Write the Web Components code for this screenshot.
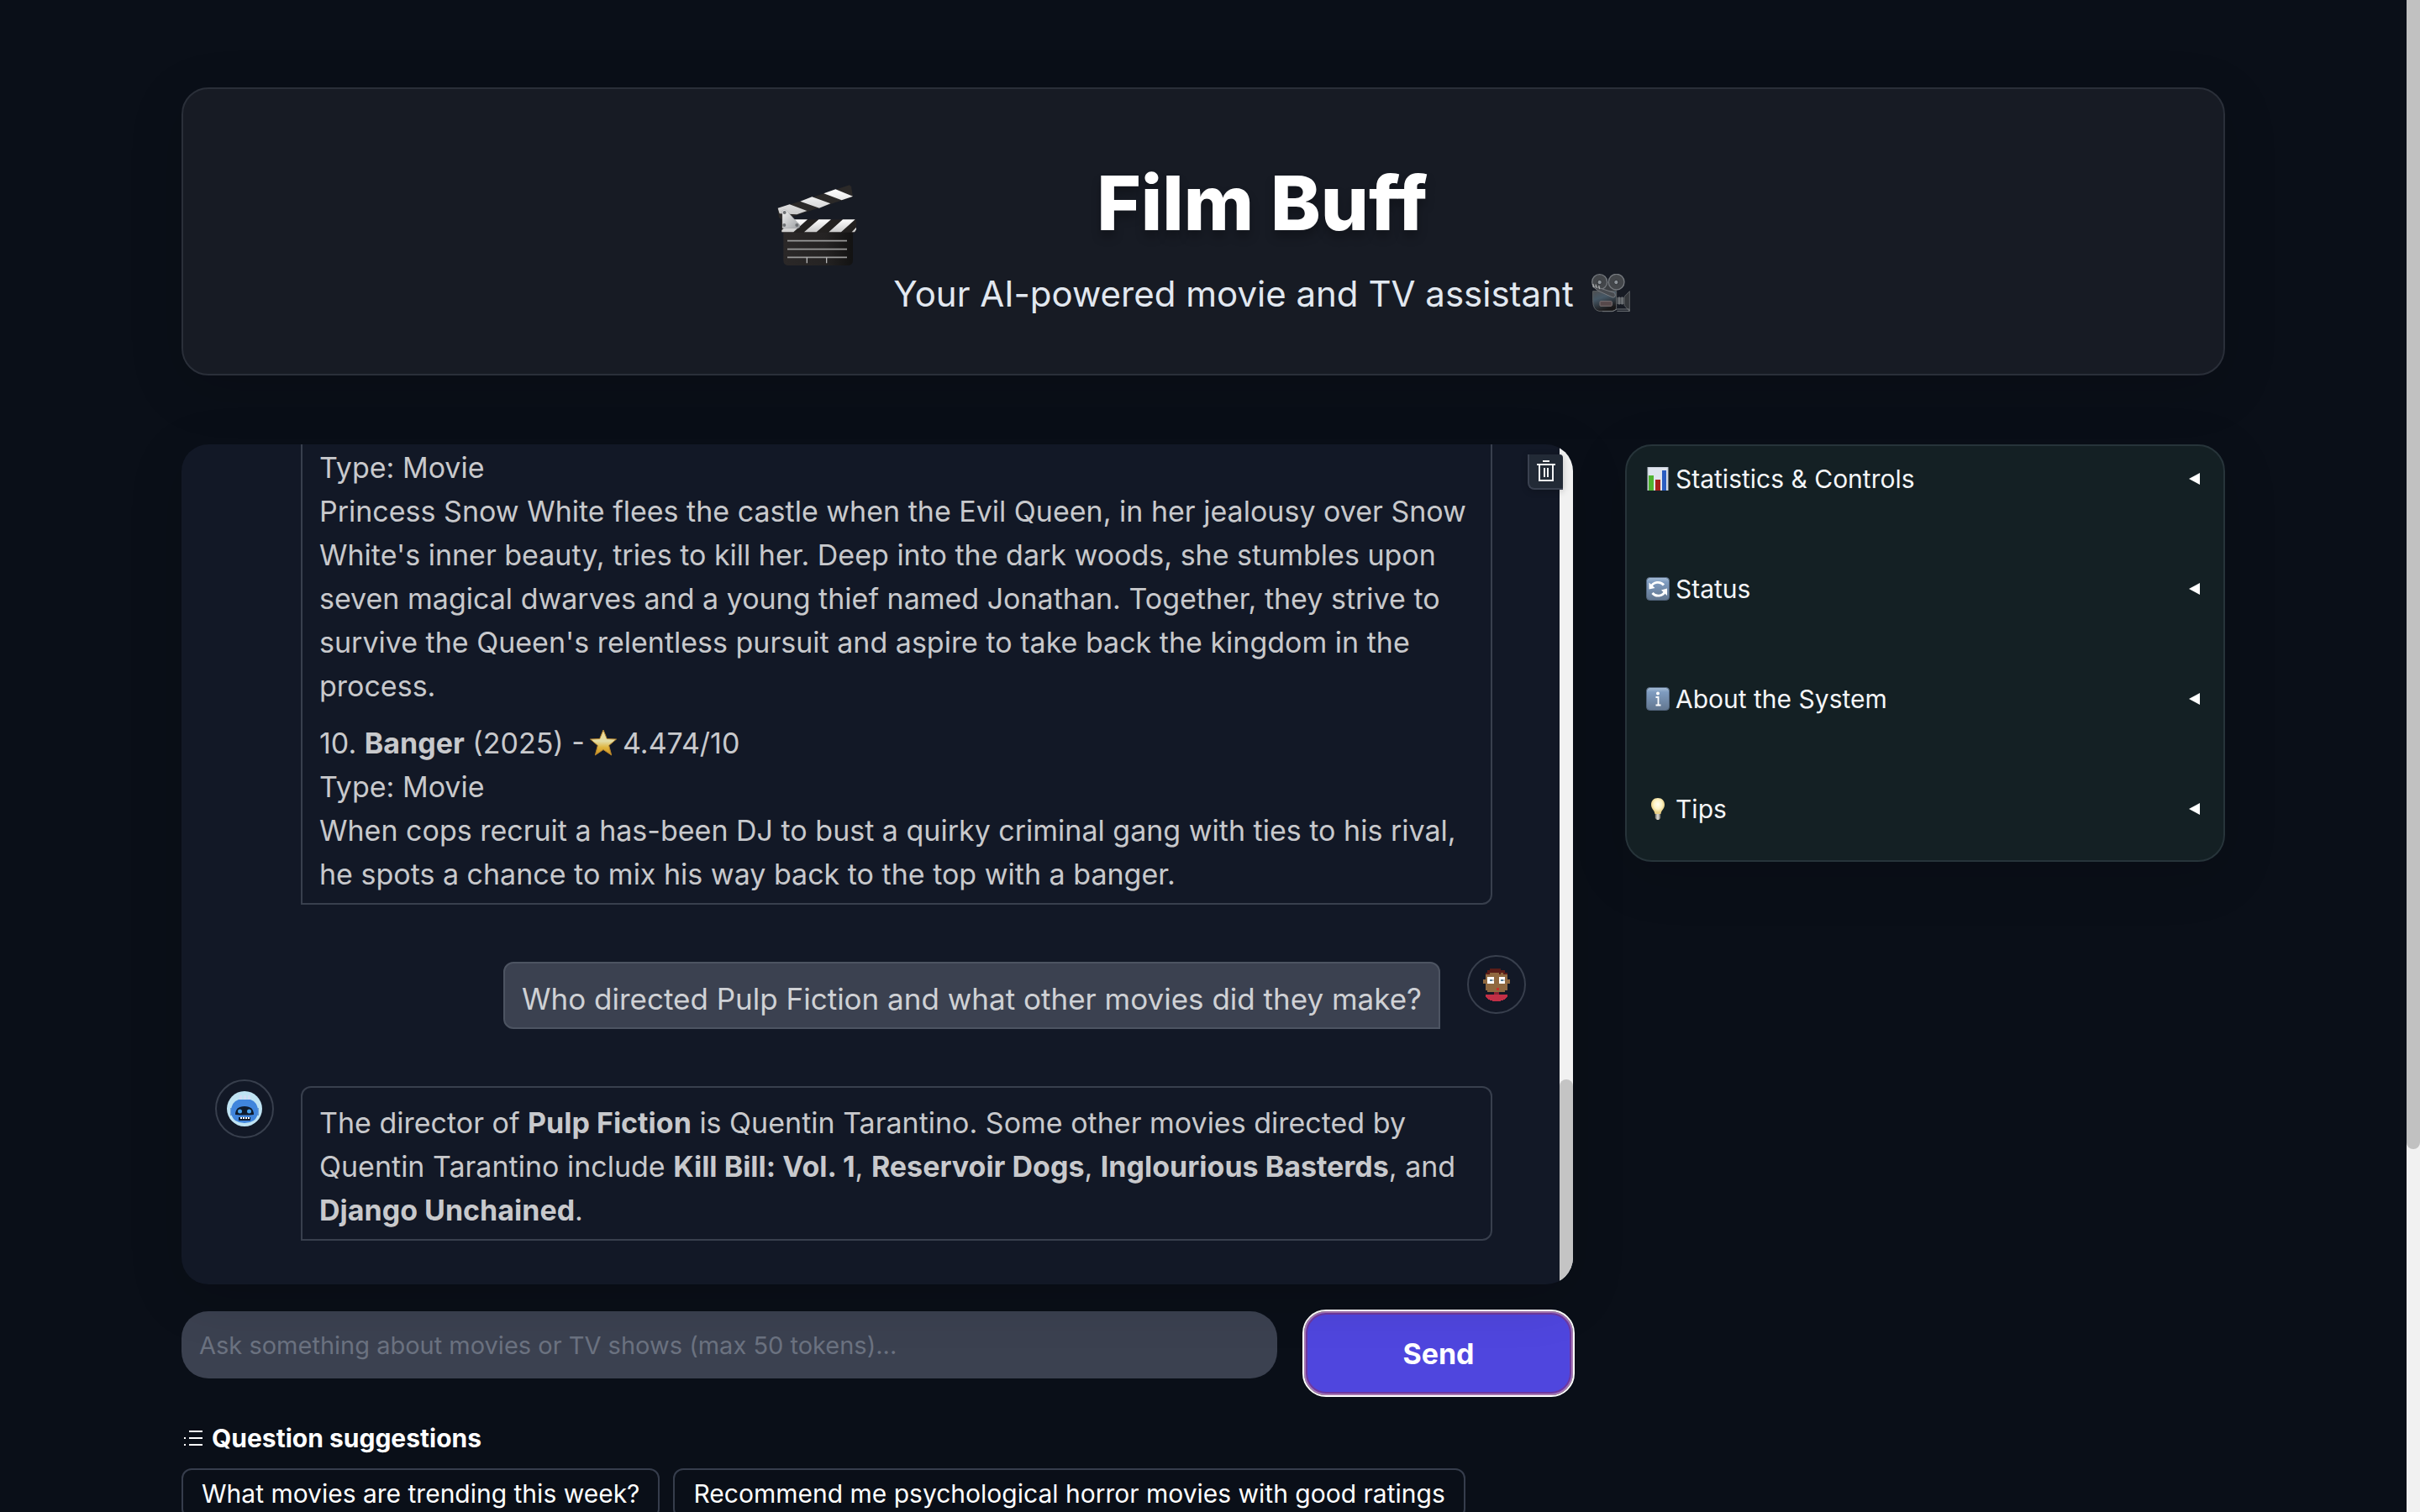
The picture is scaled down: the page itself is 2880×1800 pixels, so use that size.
<!DOCTYPE html>
<html lang="en">
<head>
<meta charset="utf-8">
<title>Film Buff</title>
<style>
  html, body { margin: 0; height: 100%; }
  body {
    background: #0a0f18;
    color: #f5f6f8;
    font-family: Inter, "Liberation Sans", sans-serif;
    font-size: 34px;
    overflow: hidden;
  }
</style>
</head>
<body>

<film-app>
  <film-header slot="header"></film-header>
  <chat-log slot="main">
    <chat-message from="bot">
      <p>Type: Movie<br>Princess Snow White flees the castle when the Evil Queen, in her jealousy over Snow<br>White's inner beauty, tries to kill her. Deep into the dark woods, she stumbles upon<br>seven magical dwarves and a young thief named Jonathan. Together, they strive to<br>survive the Queen's relentless pursuit and aspire to take back the kingdom in the<br>process.</p>
      <p>10. <b>Banger</b> (2025) - <star-icon></star-icon> 4.474/10<br>Type: Movie<br>When cops recruit a has-been DJ to bust a quirky criminal gang with ties to his rival,<br>he spots a chance to mix his way back to the top with a banger.</p>
    </chat-message>
    <chat-message from="user">
      <p>Who directed Pulp Fiction and what other movies did they make?</p>
    </chat-message>
    <chat-message from="bot" avatar>
      <p>The director of <b>Pulp Fiction</b> is Quentin Tarantino. Some other movies directed by<br>Quentin Tarantino include <b>Kill Bill: Vol. 1</b>, <b>Reservoir Dogs</b>, <b>Inglourious Basterds</b>, and<br><b>Django Unchained</b>.</p>
    </chat-message>
  </chat-log>
  <ask-form slot="main"></ask-form>
  <question-suggestions slot="main">
    <suggestion-chip>What movies are trending this week?</suggestion-chip>
    <suggestion-chip>Recommend me psychological horror movies with good ratings</suggestion-chip>
  </question-suggestions>
  <side-panel slot="side">
    <panel-row>
      <svg slot="icon" width="28" height="28" viewBox="0 0 28 28">
        <rect x="2" y="0" width="24" height="28" fill="#dfe5ee" stroke="#b9c0cc"/>
        <rect x="3" y="10" width="6" height="18" fill="#4fb32f"/>
        <rect x="11" y="15" width="6" height="13" fill="#a8201a"/>
        <rect x="19" y="4" width="5" height="24" fill="#2a5cc0"/>
      </svg>Statistics &amp; Controls</panel-row>
    <panel-row>
      <svg slot="icon" width="28" height="28" viewBox="0 0 28 28">
        <defs><linearGradient id="tile" x2="0" y2="1"><stop stop-color="#a9c0d8"/><stop offset=".2" stop-color="#7f9cc0"/><stop offset="1" stop-color="#62768f"/></linearGradient></defs>
        <rect x="0.5" y="0.5" width="27" height="27" rx="4" fill="url(#tile)" stroke="#52647c"/>
        <path d="M6 11.500a8.500 7.500 0 0 1 15-2M22.500 17a8.500 7.500 0 0 1-15 2" fill="none" stroke="#fff" stroke-width="2.800"/>
        <path d="M3.500 6.500v8l7-1.500zM25 22v-8.500l-7 2z" fill="#fff"/>
      </svg>Status</panel-row>
    <panel-row>
      <svg slot="icon" width="28" height="28" viewBox="0 0 28 28">
        <rect x="0.5" y="0.5" width="27" height="27" rx="4" fill="url(#tile)" stroke="#52647c"/>
        <circle cx="14" cy="7.500" r="2" fill="#fff"/>
        <path d="M11.500 12h3v9M11.500 21.500h6" fill="none" stroke="#fff" stroke-width="1.800"/>
      </svg>About the System</panel-row>
    <panel-row>
      <svg slot="icon" width="28" height="28" viewBox="0 0 28 28">
        <defs>
          <radialGradient id="glow" cy=".4"><stop stop-color="#fffef2"/><stop offset=".6" stop-color="#fdf3c4"/><stop offset="1" stop-color="#e8cf86"/></radialGradient>
          <linearGradient id="cap"><stop stop-color="#77746c"/><stop offset=".5" stop-color="#e4e2dc"/><stop offset="1" stop-color="#66635c"/></linearGradient>
        </defs>
        <path d="M14 1c5 0 8 3.500 8 8 0 5-4 6.500-4.500 11h-7C10 15.500 6 14 6 9c0-4.500 3-8 8-8z" fill="url(#glow)"/>
        <path d="M10.800 20h6.400v5l-2 2h-2.400l-2-2z" fill="url(#cap)"/>
      </svg>Tips</panel-row>
  </side-panel>
</film-app>

<script>
function define(name, html) {
  const template = document.createElement('template');
  template.innerHTML = html;
  customElements.define(name, class extends HTMLElement {
    constructor() {
      super();
      this.attachShadow({ mode: 'open' }).append(template.content.cloneNode(true));
    }
  });
}

define('film-app', `
  <style>
    :host { display: flex; height: 100vh; overflow: hidden; }
    .page { flex: 1; min-width: 0; padding: 104px 216px 0; overflow: hidden; }
    .columns { display: grid; grid-template-columns: minmax(0, 1fr) 714px; gap: 62px; align-items: start; margin-top: 82px; }
    .main { display: flex; flex-direction: column; }
    .bar { width: 16px; background: #f1f1f1; }
    .thumb { height: 76%; background: #c1c1c1; border-radius: 0 0 8px 8px; }
  </style>
  <div class="page">
    <slot name="header"></slot>
    <div class="columns">
      <div class="main"><slot name="main"></slot></div>
      <slot name="side"></slot>
    </div>
  </div>
  <div class="bar"><div class="thumb"></div></div>`);

define('film-header', `
  <style>
    :host {
      display: flex; justify-content: center; align-items: flex-start; gap: 44px;
      padding: 78px 0 65px; border: 2px solid #2a2f39; border-radius: 32px;
      background: #171b24; box-shadow: 0 16px 64px rgba(0, 0, 0, .15);
    }
    .clapper { margin-top: 36px; }
    .text { display: flex; flex-direction: column; align-items: center; gap: 20px; }
    h1 { margin: 0; font-size: 90px; line-height: 116px; font-weight: 800; color: #fff; text-shadow: 0 8px 12px rgba(0, 0, 0, .25); }
    p { margin: 0; display: flex; align-items: center; gap: 20px; font-size: 42px; line-height: 60px; color: #e2e8f0; }
    svg { display: block; }
  </style>
  <svg class="clapper" width="96" height="96" viewBox="72 61 288 288" aria-hidden="true">
    <defs>
      <linearGradient id="slate"><stop stop-color="#2b2828"/><stop offset=".6" stop-color="#252323"/><stop offset="1" stop-color="#121212"/></linearGradient>
      <linearGradient id="metal" x2="1" y2="1"><stop stop-color="#f1f1f1"/><stop offset="1" stop-color="#9da0a3"/></linearGradient>
      <linearGradient id="stripe" x2="0" y2="1"><stop stop-color="#fff"/><stop offset="1" stop-color="#c9c9c9"/></linearGradient>
    </defs>
    <path d="M100 226h248v104q0 19-20 19H120q-20 0-20-19z" fill="url(#slate)"/>
    <path d="M114 261h213M114 291h213M114 320h213" stroke="#989898" stroke-width="5"/>
    <path d="M184 320v21M254 320v21" stroke="#b5b5b5" stroke-width="4"/>
    <path d="M92 185h264q4 0 4 5v32q-1 9-8 9H96q-4 0-4-8z" fill="#232120"/>
    <path d="M94 230h42l50-45h-50l-42 38zM174 230h44l52-45h-44zM262 230h44l50-45h-44zM344 230h10l6-9v-8z" fill="url(#stripe)"/>
    <path d="M80 146L336 62l6 6 6 36-252 82-12-8z" fill="#2b2928"/>
    <path d="M80 144l42-13 62 23-36 13-62-3zM160 120l42-16 66 24-40 16zM244 92l42-15 62 25-40 14z" fill="url(#stripe)"/>
    <path d="M96 154q6-8 14-2l48 52q3 11-6 12h-56z" fill="url(#metal)" stroke="#86898c"/>
    <g fill="#6d7073"><circle cx="104" cy="160" r="6"/><circle cx="103" cy="205" r="6"/><circle cx="148" cy="205" r="6"/></g>
  </svg>
  <div class="text">
    <h1>Film Buff</h1>
    <p>Your AI-powered movie and TV assistant
      <svg width="48" height="48" viewBox="66 44 144 144" aria-hidden="true">
        <defs><linearGradient id="cam" x2=".4" y2="1"><stop stop-color="#4d4f52"/><stop offset=".4" stop-color="#465866"/><stop offset="1" stop-color="#191718"/></linearGradient></defs>
        <path d="M98 74h60v32H98z" fill="#3b3e42"/>
        <g fill="#43464a" stroke="#74787d" stroke-width="4"><circle cx="98" cy="73" r="27"/><circle cx="158" cy="73" r="28"/></g>
        <g fill="#8d9399" stroke="#303337" stroke-width="3"><circle cx="98" cy="74" r="8"/><circle cx="157" cy="74" r="8"/></g>
        <path d="M74 106h84v56q0 14-14 15h-48q-22-3-22-38z" fill="url(#cam)" stroke="#5d6063" stroke-width="3"/>
        <path d="M72 88l24 6 56 18q6 18-8 16L92 104z" fill="#484b50" stroke="#777a7f" stroke-width="3"/>
        <path d="M74 80l4 12M84 82l3 12M95 86l3 12" stroke="#a9abad" stroke-width="4"/>
        <rect x="99" y="142" width="43" height="17" rx="3" fill="#56484a" stroke="#7a7072" stroke-width="3"/>
        <path d="M160 128h26v24h-26z" fill="#54585d"/><path d="M168 126v28M178 126v28" stroke="#85888c" stroke-width="3"/>
        <path d="M186 126l19-20v72l-19-22z" fill="#34373b" stroke="#5b5e63" stroke-width="3"/>
        <path d="M108 178h36l16-8h44v7h-44" fill="none" stroke="#73777b" stroke-width="3"/>
      </svg>
    </p>
  </div>`);

define('star-icon', `
  <style>
    :host { display: inline-flex; vertical-align: middle; margin: -8px -4px 0; }
  </style>
  <svg width="34" height="32" viewBox="0 0 34 32" aria-hidden="true">
    <defs><linearGradient id="gold" x2="0" y2="1"><stop stop-color="#f3d98e"/><stop offset=".45" stop-color="#e2dca4"/><stop offset=".7" stop-color="#dfb43c"/><stop offset="1" stop-color="#c98f22"/></linearGradient></defs>
    <path d="M17 1l4.300 10.500L32.500 12l-8.800 7.500 3 11.500L17 24.500 7.300 31l3-11.500L1.500 12l11.200-.5z" fill="url(#gold)" stroke="#b07f2a"/>
  </svg>`);

define('chat-log', `
  <style>
    :host {
      display: flex; height: 1000px; border-radius: 32px; overflow: hidden; position: relative;
      background: #121826; box-shadow: 0 16px 64px rgba(0, 0, 0, .15);
    }
    .log { flex: 1; min-width: 0; box-sizing: border-box; padding: 0 40px 52px; display: flex; flex-direction: column; justify-content: flex-end; gap: 60px; }
    .bar { width: 16px; display: flex; align-items: flex-end; background: #f1f1f1; }
    .thumb { width: 100%; height: 244px; background: #c4c4c4; border-radius: 8px 8px 0 0; }
    button {
      position: absolute; top: 12px; right: 12px; width: 42px; height: 42px; padding: 0;
      display: flex; align-items: center; justify-content: center; color: #f3f4f6;
      background: #222a36; border: 0 solid #3a4150; border-width: 0 0 2px 2px; border-radius: 0 4px 0 8px;
      box-shadow: 0 2px 8px rgba(0, 0, 0, .2);
    }
  </style>
  <div class="log"><slot></slot></div>
  <div class="bar"><div class="thumb"></div></div>
  <button type="button" aria-label="Clear">
    <svg width="22" height="26" viewBox="0 0 22 26" fill="none" stroke="currentColor" stroke-width="2">
      <path d="M0 5h22M7 1h8M3 5v19h16V5M9 9v11M13 9v11"/>
    </svg>
  </button>`);

const ROBOT = `
  <svg width="42" height="42" viewBox="0 0 42 42">
    <circle cx="21" cy="21" r="21" fill="#bfe3f3"/>
    <path d="M15 5h3v5h-3zM20 5h3v5h-3zM25 5h3v5h-3z" fill="#d3dcf4"/>
    <path d="M4 20h34v9H4z" fill="#6f9fd8"/>
    <path d="M14 10h14q9 3 9 14 0 7-5 11-5 3-11 3t-11-3q-5-4-5-11 0-11 9-14z" fill="#4085dc"/>
    <path d="M10 28q0-10 11-10t11 10q-11 1-22 0z" fill="#0e1a2c"/>
    <circle cx="15.500" cy="24" r="2.500" fill="#4aa3ec"/><circle cx="26.500" cy="24" r="2.500" fill="#4aa3ec"/>
    <path d="M14 31h14v4H14z" fill="#0e1a2c"/>
    <path d="M16 31h2v2h-2zM19 31h2v2h-2zM22 31h2v2h-2zM25 31h2v2h-2z" fill="#fff"/>
  </svg>`;

const PERSON = `
  <svg width="32" height="39" viewBox="795 162 96 117" shape-rendering="crispEdges">
    <path d="M804 177h78v63h-9v6h-63v-6h-6zM795 201h9v15h-9zM882 201h9v15h-9z" fill="#8f6840"/>
    <path d="M819 162h39v6h15v9h9v6h-15v-6h-9v6h-6v-6h-33v6h-15v-6h6v-9h9z" fill="#5a1d18"/>
    <path d="M810 192h24v24h-24zM852 192h21v24h-21z" fill="#fff"/>
    <path d="M819 201h9v6h-9zM858 201h9v6h-9z" fill="#5b7f96"/>
    <path d="M828 201h6v6h-6zM867 201h6v6h-6z" fill="#ccc"/>
    <path d="M843 231h9v9h-9z" fill="#c8312a"/>
    <path d="M834 246h18v9h-18z" fill="#8e2233"/>
    <path d="M804 255h78v9q-12 15-39 15t-39-15z" fill="#c22f46"/>
  </svg>`;

customElements.define('chat-message', class extends HTMLElement {
  constructor() {
    super();
    this.attachShadow({ mode: 'open' });
  }
  connectedCallback() {
    this.shadowRoot.innerHTML = `
      <style>
        :host { display: flex; align-items: flex-start; gap: 32px; flex: none; }
        :host([from="user"]) { flex-direction: row-reverse; }
        .avatar {
          box-sizing: border-box; width: 70px; height: 70px; flex: none; border-radius: 50%; border: 2px solid #383f4d;
          display: flex; align-items: center; justify-content: center;
        }
        :host([from="bot"]:not([avatar])) .avatar { visibility: hidden; }
        .bubble {
          margin-top: 8px; padding: 16px 20px 8px; border: 2px solid #383f4d; border-radius: 12px;
          color: #c8c9cc; line-height: 52px; white-space: nowrap;
        }
        :host([from="bot"]) .bubble { flex: 1; min-width: 0; margin-right: 40px; border-bottom-left-radius: 0; }
        :host([from="user"]) .bubble { background: #3b4150; border-color: #4d5462; color: #cfd1d5; border-bottom-right-radius: 0; font-size: 35px; }
        ::slotted(p) { margin: 0; }
        ::slotted(p:not(:first-child)) { margin-top: 16px; }
      </style>
      <div class="avatar" aria-hidden="true">${this.getAttribute('from') === 'user' ? PERSON : ROBOT}</div>
      <div class="bubble"><slot></slot></div>`;
  }
});

define('ask-form', `
  <style>
    :host { display: block; margin-top: 32px; }
    form { display: flex; align-items: flex-start; gap: 32px; margin: 0; }
    input {
      flex: 1; min-width: 0; box-sizing: border-box; height: 80px; padding: 0 21px; border: 0; border-radius: 32px;
      background: #3b4150; color: #f5f6f8; font: 29px Inter, "Liberation Sans", sans-serif;
    }
    input::placeholder { color: #6b7280; opacity: 1; }
    button {
      width: 320px; height: 100px; padding: 0; border: 2px solid #a678b2; border-radius: 26px; outline: 2px solid #fff;
      background: #4f46de; box-shadow: inset 0 0 0 2px #6f38a0; color: #fff; font: 700 34px Inter, "Liberation Sans", sans-serif;
    }
  </style>
  <form onsubmit="return false">
    <input type="text" aria-label="Question" placeholder="Ask something about movies or TV shows (max 50 tokens)...">
    <button type="submit">Send</button>
  </form>`);

define('question-suggestions', `
  <style>
    :host { display: flex; flex-direction: column; gap: 16px; margin-top: 31px; }
    .label { display: flex; align-items: center; gap: 10px; padding-left: 2px; font-size: 30px; line-height: 40px; font-weight: 700; color: #fff; }
    .chips { display: flex; gap: 16px; }
  </style>
  <div class="label">
    <svg width="24" height="24" viewBox="0 0 24 24" aria-hidden="true" stroke="#fff" stroke-width="2">
      <path d="M7 4h16M7 12h16M7 20h16M1 12h2M1 20h2"/>
    </svg>Question suggestions
  </div>
  <div class="chips"><slot></slot></div>`);

define('suggestion-chip', `
  <style>
    :host { display: block; }
    button {
      height: 60px; padding: 0 22px; border: 2px solid #363d4c; border-radius: 12px; background: none;
      color: #fff; font: 30px Inter, "Liberation Sans", sans-serif; white-space: nowrap;
    }
  </style>
  <button type="button"><slot></slot></button>`);

define('side-panel', `
  <style>
    :host {
      display: flex; flex-direction: column; gap: 91px; padding: 19px 28px 41px 23px;
      background: #142024; border: 2px solid #27343a; border-radius: 32px; box-shadow: 0 16px 64px rgba(0, 0, 0, .15);
    }
  </style>
  <slot></slot>`);

define('panel-row', `
  <style>
    :host { display: block; }
    button {
      width: 100%; height: 40px; padding: 0; border: 0; background: none; display: flex; align-items: center; gap: 7px;
      color: #f5f6f8; font: 30px Inter, "Liberation Sans", sans-serif; text-align: left;
    }
    .title { flex: 1; }
    ::slotted(svg) { display: block; }
  </style>
  <button type="button" aria-expanded="false">
    <slot name="icon"></slot>
    <span class="title"><slot></slot></span>
    <svg width="13" height="14" viewBox="0 0 13 14" aria-hidden="true"><path d="M0 7L13 0v14z" fill="#fff"/></svg>
  </button>`);
</script>
</body>
</html>
